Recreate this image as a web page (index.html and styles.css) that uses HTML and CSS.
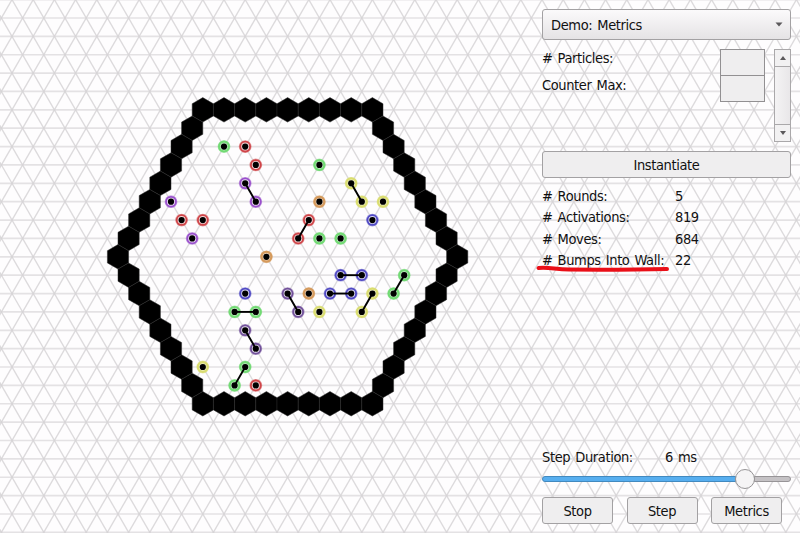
FILE: index.html
```
<!DOCTYPE html>
<html lang="en">
<head>
<meta charset="utf-8">
<title>Particle Simulator</title>
<link rel="stylesheet" href="styles.css">
</head>
<body>
<svg class="world" id="world" width="800" height="533" viewBox="0 0 800 533"></svg>
<aside class="panel">
  <div class="select"><span>Demo: Metrics</span><svg width="8" height="5" viewBox="0 0 8 5"><path d="M.5.5h7L4 4.5z"/></svg></div>
  <div class="params">
    <div class="param-names"><div>#&nbsp;Particles:</div><div>Counter Max:</div></div>
    <div class="inputs"><div class="input"></div><div class="input"></div></div>
    <div class="scrollbar">
      <div class="arrow"><svg width="6" height="4" viewBox="0 0 6 4"><path d="M0 4h6L3 0z"/></svg></div>
      <div class="track"></div>
      <div class="arrow"><svg width="6" height="4" viewBox="0 0 6 4"><path d="M0 0h6L3 4z"/></svg></div>
    </div>
  </div>
  <div class="button wide"><span>Instantiate</span></div>
  <div class="stats">
    <span>#&nbsp;Rounds:</span><span>5</span>
    <span>#&nbsp;Activations:</span><span>819</span>
    <span>#&nbsp;Moves:</span><span>684</span>
    <span class="marked">#&nbsp;Bumps Into Wall:<svg class="marker" width="136" height="8" viewBox="0 0 136 8"><path d="M3.5 3 C15 2 20 4.5 34 4.6 S90 5 132 4"/></svg></span><span>22</span>
  </div>
  <div class="duration"><span>Step Duration:</span><span>6 ms</span></div>
  <div class="slider"><div class="fill"></div><div class="knob"></div><div class="rest"></div></div>
  <div class="actions">
    <div class="button"><span>Stop</span></div>
    <div class="button"><span>Step</span></div>
    <div class="button"><span>Metrics</span></div>
  </div>
</aside>
<script src="world.js"></script>
</body>
</html>
```
FILE: styles.css
```
* { box-sizing: border-box; }
body {
  margin: 0;
  width: 800px;
  height: 533px;
  overflow: hidden;
  background: #fefdfe;
  color: #111;
  font: 14.5px/21px "DejaVu Sans Condensed", "DejaVu Sans", sans-serif;
  font-stretch: condensed;
  letter-spacing: -0.38px;
  word-spacing: 1.3px;
  display: grid;
}
.world { grid-area: 1 / 1; display: block; }
.grid-h { stroke: #e4e2e4; stroke-width: 1.7; }
.grid-d { stroke: #d6d4d6; stroke-opacity: .85; stroke-width: 1.35; }
.wall { fill: #000; stroke: #292929; stroke-width: .5; }
.ring { fill: #fff; fill-opacity: .6; stroke-width: 1.8; }
.ring.soft { fill-opacity: .2; stroke-width: 2.2; }
.halo { stroke: none; opacity: .5; }
.dot { fill: #000; }
.bond { stroke: #000; stroke-width: 1.9; }

.panel {
  grid-area: 1 / 1;
  position: relative;
  justify-self: end;
  width: 249px;
  height: 533px;
  margin-right: 9px;
  padding-top: 9px;
  display: flex;
  flex-direction: column;
}
.select, .button {
  border: 1px solid #a3a1a3;
  border-radius: 3px;
  background: #efeeef;
  display: flex;
  align-items: center;
}
.select {
  height: 31px;
  padding: 0 7px 0 8px;
  justify-content: space-between;
  background: linear-gradient(#fbfafb, #e5e3e5);
}
.select span, .button span { padding-top: 2px; }
.select path, .arrow path { fill: #5b595b; }
.params { display: flex; height: 93px; margin-top: 9px; }
.param-names { flex: 1; line-height: 27px; margin-top: -4px; }
.inputs { width: 45px; margin-right: 9px; }
.input { height: 27px; border: 1px solid #929092; background: #efeeef; }
.input + .input { margin-top: -1px; }
.scrollbar { width: 17px; display: flex; flex-direction: column; border: 1px solid #aaa8aa; }
.arrow { height: 16px; display: grid; place-items: center; background: #f2f1f2; }
.track { flex: 1; border: solid #aaa8aa; border-width: 1px 0; background: linear-gradient(90deg, #f4f3f4, #e9e7e9); }
.button { justify-content: center; height: 27px; }
.wide { margin-top: 9px; }
.stats { margin-top: 8px; display: grid; grid-template-columns: 133px 1fr; grid-auto-rows: 21.3px; }
.stats span { white-space: nowrap; }
.marked { position: relative; }
.marker { position: absolute; left: -7px; top: 15px; }
.marker path { fill: none; stroke: #ea0f18; stroke-width: 4; stroke-linecap: round; }
.duration { margin-top: auto; display: flex; height: 21px; }
.duration span:first-child { width: 123px; }
.slider { height: 22px; display: flex; align-items: center; }
.fill { width: 194px; height: 6px; background: #57aeef; border: 1px solid #4289bf; border-radius: 3px 0 0 3px; }
.knob { width: 20px; height: 20px; margin: 0 -1px; border: 1px solid #969496; border-radius: 50%; background: #f5f4f5; z-index: 1; }
.rest { flex: 1; height: 6px; background: #c5c2c5; border: 1px solid #979497; border-radius: 0 3px 3px 0; }
.actions { display: grid; grid-template-columns: repeat(3, 71px); column-gap: 13.5px; margin: 7px 0 9px; }
```
FILE: world.js
```
const CX = 287.6, CY = 256.8, HALF = 10.6, ROW = 18.37;
const NS = 'http://www.w3.org/2000/svg';
const world = document.getElementById('world');
const px = a => CX + a * HALF;
const py = r => CY + r * ROW;

function add(tag, cls, attrs) {
  const el = document.createElementNS(NS, tag);
  el.setAttribute('class', cls);
  for (const k in attrs) el.setAttribute(k, attrs[k]);
  world.appendChild(el);
}
function line(cls, a1, r1, a2, r2) {
  add('line', cls, { x1: px(a1), y1: py(r1), x2: px(a2), y2: py(r2) });
}

// Triangular lattice
for (let r = -14; r <= 16; r++) line('grid-h', -28, r, 50, r);
for (let a = -60; a <= 80; a += 2) {
  line('grid-d', a - 16, -16, a + 16, 16);
  line('grid-d', a + 16, -16, a - 16, 16);
}

// Hexagonal wall of side 8
function hex(a, r) {
  const s = HALF * 2 / Math.sqrt(3), x = px(a), y = py(r);
  const pts = [[0, -s], [HALF, -s / 2], [HALF, s / 2], [0, s], [-HALF, s / 2], [-HALF, -s / 2]];
  add('polygon', 'wall', { points: pts.map(p => (x + p[0]) + ',' + (y + p[1])).join(' ') });
}
for (let r = -8; r <= 8; r++) {
  const edge = 16 - Math.abs(r);
  if (Math.abs(r) === 8) for (let a = -8; a <= 8; a += 2) hex(a, r);
  else { hex(-edge, r); hex(edge, r); }
}

// Particles: colour, head column and row, optional tail column and row
const colors = { g: '#72da74', r: '#cf4448', p: '#9a50cc', o: '#d59a5c', y: '#dadd70', b: '#5049c4', v: '#71509a' };
const particles = [
  ['g', -6, -6], ['r', -4, -6], ['r', -3, -5], ['p', -4, -4, -3, -3],
  ['p', -11, -3], ['r', -10, -2], ['r', -8, -2], ['p', -9, -1], ['o', -2, 0],
  ['g', 3, -5], ['y', 6, -4, 7, -3], ['y', 9, -3], ['o', 3, -3], ['b', 8, -2],
  ['r', 2, -2, 1, -1], ['g', 3, -1], ['g', 5, -1], ['b', 5, 1, 7, 1],
  ['g', 11, 1, 10, 2], ['b', -4, 2], ['v', 0, 2, 1, 3], ['o', 2, 2],
  ['b', 4, 2, 6, 2], ['y', 8, 2, 7, 3], ['y', 3, 3], ['g', -5, 3, -3, 3],
  ['v', -4, 4, -3, 5], ['y', -8, 6], ['g', -4, 6, -5, 7], ['r', -3, 7]
];
for (const [c, ...p] of particles) {
  for (let i = 0; i < p.length; i += 2) {
    const at = { cx: px(p[i]), cy: py(p[i + 1]) };
    add('circle', 'halo', { ...at, r: 6.4, fill: colors[c] });
    add('circle', 'gyo'.includes(c) ? 'ring soft' : 'ring', { ...at, r: 4.9, stroke: colors[c] });
    add('circle', 'dot', { ...at, r: 3.1 });
  }
  if (p.length === 4) line('bond', ...p);
}
```
